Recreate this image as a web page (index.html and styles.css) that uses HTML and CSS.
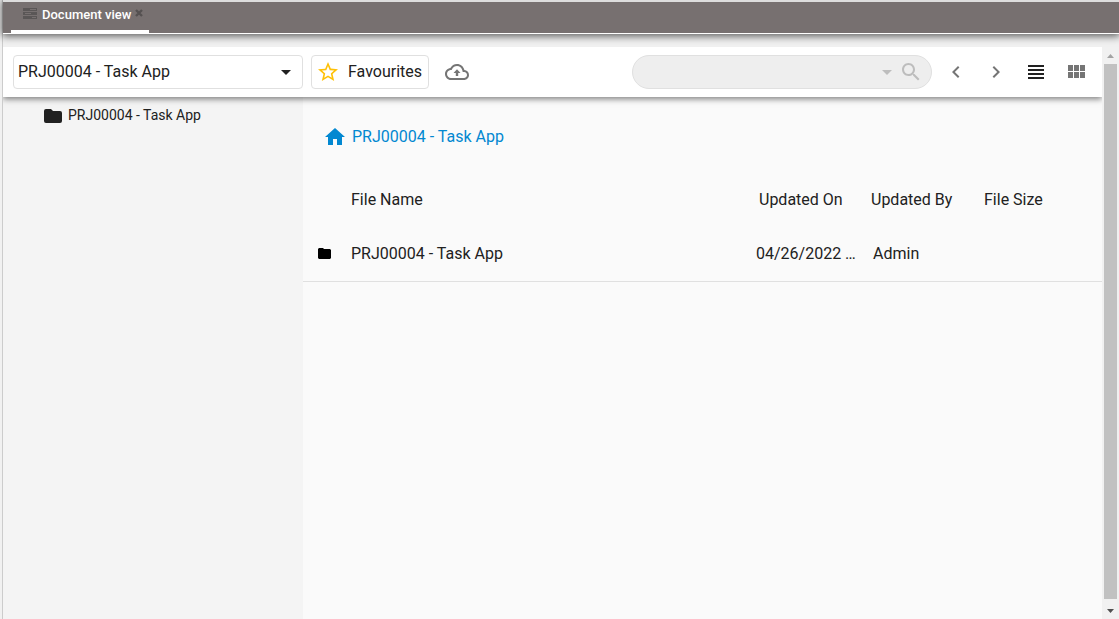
FILE: index.html
```html
<!DOCTYPE html>
<html lang="en">
<head>
<meta charset="utf-8">
<meta name="viewport" content="width=device-width, initial-scale=1">
<title>Document view</title>
<link rel="stylesheet" href="styles.css">
</head>
<body>
<div class="app">
  <header class="tabs">
    <div class="tab">
      <svg class="tab-icon" width="14" height="12" viewBox="0 0 14 12" aria-hidden="true"><path fill="#5a5656" d="M0 0h14v3H0zM0 4h14v3H0zM0 8h14v3H0z"/><path stroke="#777070" d="M7 1.500h6M2 5.500h6M9 9.500h4"/></svg>
      <a class="tab-label" href="#">Document view</a>
      <button class="tab-close" aria-label="Close tab"><svg width="8" height="8" viewBox="0 0 8 8"><path d="M1 1l6 6M7 1L1 7" stroke="#555151" stroke-width="2.400"/></svg></button>
    </div>
  </header>
  <div class="viewport">
    <main class="page">
      <div class="toolbar">
        <select class="project" aria-label="Project"><option>PRJ00004 - Task App</option></select>
        <button class="favourites"><svg width="24" height="24" viewBox="0 0 24 24" fill="#ffc107" aria-hidden="true"><path d="M22 9.240l-7.190-.62L12 2 9.190 8.630 2 9.240l5.460 4.730L5.820 21 12 17.270 18.180 21l-1.630-7.030L22 9.240zM12 15.400l-3.760 2.270 1-4.280-3.320-2.880 4.380-.38L12 6.100l1.710 4.040 4.380.38-3.320 2.880 1 4.280L12 15.400z"/></svg><span>Favourites</span></button>
        <button class="icon-btn upload" aria-label="Upload"><svg width="24" height="24" viewBox="0 0 24 24" fill="#757575"><path d="M19.350 10.040C18.670 6.590 15.640 4 12 4 9.110 4 6.600 5.640 5.350 8.040 2.340 8.360 0 10.910 0 14c0 3.310 2.690 6 6 6h13c2.760 0 5-2.240 5-5 0-2.640-2.050-4.780-4.650-4.960zM19 18H6c-2.210 0-4-1.790-4-4 0-2.050 1.530-3.760 3.560-3.970l1.070-.11.5-.95C8.080 7.140 9.940 6 12 6c2.620 0 4.880 1.860 5.390 4.430l.3 1.500 1.530.11c1.560.1 2.780 1.410 2.780 2.960 0 1.650-1.350 3-3 3z"/><path d="M8.500 13h2.300v3h2.400v-3h2.300L12 9.300z"/></svg></button>
        <div class="search">
          <input type="text" aria-label="Search documents">
          <button class="search-btn options" aria-label="Search options"><svg width="10" height="5" viewBox="0 0 10 5"><path d="M0 0h10L5 5z" fill="#bdbdbd"/></svg></button>
          <button class="search-btn" aria-label="Search"><svg width="24" height="24" viewBox="0 0 24 24" fill="#bdbdbd"><path d="M15.500 14h-.79l-.28-.27C15.410 12.590 16 11.110 16 9.500 16 5.910 13.090 3 9.500 3S3 5.910 3 9.500 5.910 16 9.500 16c1.610 0 3.090-.59 4.230-1.570l.27.28v.79l5 4.990L20.490 19l-4.990-5zm-6 0C7.010 14 5 11.990 5 9.500S7.010 5 9.500 5 14 7.010 14 9.500 11.990 14 9.500 14z"/></svg></button>
        </div>
        <nav class="view-controls" aria-label="View controls">
          <button class="icon-btn" aria-label="Previous"><svg width="24" height="24" viewBox="0 0 24 24" fill="#757575"><path d="M15.410 7.410L14 6l-6 6 6 6 1.410-1.410L10.830 12z"/></svg></button>
          <button class="icon-btn" aria-label="Next"><svg width="24" height="24" viewBox="0 0 24 24" fill="#757575"><path d="M10 6L8.590 7.410 13.170 12l-4.580 4.590L10 18l6-6z"/></svg></button>
          <button class="icon-btn" aria-label="List view"><svg width="24" height="24" viewBox="0 0 24 24" fill="#212121"><path d="M4 5h16v2H4zM4 9h16v2H4zM4 13h16v2H4zM4 17h16v2H4z"/></svg></button>
          <button class="icon-btn" aria-label="Grid view"><svg width="24" height="24" viewBox="0 0 24 24" fill="#757575"><path d="M4 5h5v6H4zM10 5h5v6h-5zM16 5h5v6h-5zM4 12h5v6H4zM10 12h5v6h-5zM16 12h5v6h-5z"/></svg></button>
        </nav>
      </div>
      <div class="content">
        <aside class="tree">
          <a class="tree-item" href="#"><svg width="18" height="14" viewBox="0 0 18 14" aria-hidden="true"><path fill="#212121" d="M2 0h5l2 2h7a2 2 0 0 1 2 2v8a2 2 0 0 1-2 2H2a2 2 0 0 1-2-2V2a2 2 0 0 1 2-2z"/></svg><span>PRJ00004 - Task App</span></a>
        </aside>
        <section class="files">
          <nav class="crumbs" aria-label="Breadcrumb"><a href="#"><svg width="24" height="24" viewBox="0 0 24 24" fill="#0288d1" aria-hidden="true"><path d="M10 20v-6h4v6h5v-8h3L12 3 2 12h3v8z"/></svg><span>PRJ00004 - Task App</span></a></nav>
          <table class="file-table">
            <colgroup><col class="col-icon"><col><col class="col-updated"><col class="col-by"><col class="col-size"></colgroup>
            <thead><tr><th></th><th>File Name</th><th class="date">Updated On</th><th>Updated By</th><th>File Size</th></tr></thead>
            <tbody><tr><td class="icon-cell"><svg width="13" height="11" viewBox="0 0 13 11" aria-hidden="true"><path d="M1 0h4l1 1h6l1 1v8l-1 1H1l-1-1V1z"/></svg></td><td>PRJ00004 - Task App</td><td>04/26/2022 …</td><td class="author">Admin</td><td></td></tr></tbody>
          </table>
        </section>
      </div>
    </main>
    <div class="scrollbar" aria-hidden="true">
      <svg width="17" height="17" viewBox="0 0 17 17"><path d="M5 11h7L8.500 7z" fill="#a3a3a3"/></svg>
      <div class="thumb"></div>
      <svg width="17" height="17" viewBox="0 0 17 17"><path d="M5 7h7l-3.500 4z" fill="#505050"/></svg>
    </div>
  </div>
</div>
</body>
</html>
```
FILE: styles.css
```css
* {
  box-sizing: border-box;
}

body {
  margin: 0;
  background: #f1f1f1;
  color: #212121;
  font: 16px/24px Roboto, sans-serif;
}

button,
select,
input {
  margin: 0;
  padding: 0;
  border: 0;
  background: transparent;
  color: inherit;
  font: inherit;
}

a {
  color: inherit;
  text-decoration: none;
}

svg {
  display: block;
  flex: none;
}

.app {
  display: flex;
  flex-direction: column;
  height: 100vh;
  margin-left: 2px;
  border-left: 1px solid #cccccc;
}

.tabs {
  flex: none;
  margin-bottom: 13px;
  padding-left: 8px;
  border-top: 2px solid #dddddd;
  border-bottom: 1px solid #ffffff;
  background: #777070;
  box-shadow: 0 1px 8px 1px rgba(0, 0, 0, 0.65);
}

.tab {
  display: inline-flex;
  align-items: flex-start;
  height: 31px;
  padding: 0 6px 0 12px;
  border-bottom: 3px solid #ffffff;
  vertical-align: top;
}

.tab-icon {
  margin-top: 6px;
}

.tab-label {
  margin-left: 5px;
  color: #ffffff;
  font-size: 13px;
  font-weight: 500;
  line-height: 26px;
}

.tab-close {
  margin: 7px 0 0 4px;
}

.viewport {
  display: flex;
  flex: 1;
  min-height: 0;
}

.page {
  display: flex;
  flex: 1;
  flex-direction: column;
  min-width: 0;
  background: #fafafa;
}

.toolbar {
  z-index: 1;
  display: flex;
  flex: none;
  align-items: center;
  padding: 8px 14px 8px 10px;
  background: #ffffff;
  box-shadow: 0 2px 6px rgba(0, 0, 0, 0.5);
  clip-path: inset(0 0 -12px 0);
}

.project,
.favourites {
  height: 34px;
  border: 1px solid #e0e0e0;
  border-radius: 4px;
}

.project {
  width: 290px;
  padding: 0 24px 0 4px;
  appearance: none;
  background: url("data:image/svg+xml,%3Csvg xmlns='http://www.w3.org/2000/svg' viewBox='0 0 10 5'%3E%3Cpath d='M0 0h10L5 5z' fill='%23212121'/%3E%3C/svg%3E") right 11px center / 10px 5px no-repeat;
}

.favourites {
  display: flex;
  align-items: center;
  gap: 8px;
  margin-left: 8px;
  padding: 0 6px 0 4px;
}

.icon-btn {
  display: grid;
  place-items: center;
  width: 40px;
  height: 32px;
}

.upload {
  margin-left: 8px;
}

.search {
  display: flex;
  align-items: center;
  width: 300px;
  height: 34px;
  margin-left: auto;
  padding: 0 8px 0 16px;
  border: 1px solid #e0e0e0;
  border-radius: 17px;
  background: #eeeeee;
}

.search input {
  flex: 1;
  min-width: 0;
  outline: 0;
}

.options {
  margin-right: 7px;
}

.view-controls {
  display: flex;
  margin-left: 4px;
  margin-right: -8px;
}

.content {
  display: flex;
  flex: 1;
  min-height: 0;
}

.tree {
  flex: none;
  width: 300px;
  padding: 6px 0 0 41px;
  background: #f4f4f4;
}

.tree-item {
  display: flex;
  align-items: center;
  gap: 6px;
  font-size: 14px;
}

.tree-item svg {
  margin-top: 2px;
}

.files {
  flex: 1;
  min-width: 0;
}

.crumbs {
  padding: 28px 0 24px 20px;
  color: #0288d1;
}

.crumbs a {
  display: inline-flex;
  gap: 5px;
  vertical-align: top;
}

.file-table {
  width: 100%;
  border-collapse: collapse;
  table-layout: fixed;
}

.file-table th,
.file-table td {
  height: 54px;
  padding: 0;
  font-weight: 400;
  text-align: left;
  white-space: nowrap;
}

.file-table tbody tr {
  border-bottom: 1px solid #e0e0e0;
}

.col-icon {
  width: 48px;
}

.col-updated {
  width: 115px;
}

.col-by {
  width: 113px;
}

.col-size {
  width: 118px;
}

.file-table .icon-cell {
  padding-left: 15px;
}

.file-table .date {
  padding-left: 3px;
}

.file-table .author {
  padding-left: 2px;
}

.scrollbar {
  display: flex;
  flex: none;
  flex-direction: column;
  width: 17px;
  background: #f1f1f1;
}

.thumb {
  flex: 1;
  width: 13px;
  margin: 0 auto 3px;
  background: #c1c1c1;
}
```
